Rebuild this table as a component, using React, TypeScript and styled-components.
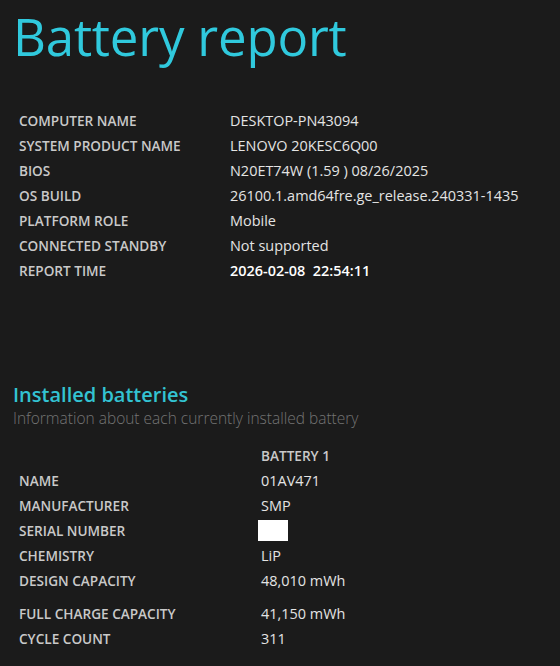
import React from 'react';
import styled, { createGlobalStyle } from 'styled-components';

const GlobalStyle = createGlobalStyle`
  html, body {
    margin: 0;
    padding: 0;
    background-color: #1b1b1b;
  }
  body {
    font-family: 'Open Sans', 'Noto Sans', sans-serif;
  }
`;

const Page = styled.div`
  width: 560px;
  height: 666px;
  overflow: hidden;
  background-color: #1b1b1b;
  padding: 0 0 0 13px;
  box-sizing: border-box;
`;

const Title = styled.h1`
  margin: 0;
  height: 108px;
  font-family: 'Open Sans', sans-serif;
  font-weight: 400;
  font-size: 51px;
  line-height: 72px;
  color: #30c9dd;
  letter-spacing: -0.2px;
`;

const Table = styled.div`
  display: flex;
  flex-direction: column;
  padding-left: 6px;
`;

const Row = styled.div<{ $spaced?: boolean }>`
  display: flex;
  align-items: center;
  height: 25px;
  margin-top: ${(p) => (p.$spaced ? '8px' : '0')};
`;

const Label = styled.div<{ $width: number }>`
  width: ${(p) => p.$width}px;
  flex-shrink: 0;
  font-family: 'Open Sans', sans-serif;
  font-weight: 600;
  font-size: 13.6px;
  color: #c9c9c9;
  text-transform: uppercase;
  white-space: nowrap;
`;

const Value = styled.div<{ $strong?: boolean }>`
  font-family: 'Open Sans', sans-serif;
  font-weight: ${(p) => (p.$strong ? 600 : 400)};
  font-size: 14.45px;
  color: ${(p) => (p.$strong ? '#ffffff' : '#e4e4e4')};
  white-space: pre;
`;

const Section = styled.div`
  margin-top: 100px;
`;

const SectionTitle = styled.h2`
  margin: 0;
  font-family: 'Open Sans', sans-serif;
  font-weight: 600;
  font-size: 20px;
  line-height: 24px;
  color: #33c3d2;
`;

const SectionSub = styled.div`
  font-family: 'Open Sans', sans-serif;
  font-weight: 300;
  font-size: 15.5px;
  line-height: 22px;
  color: #747474;
  margin-bottom: 14px;
`;

const Redacted = styled.span`
  display: inline-block;
  width: 30px;
  height: 21px;
  margin-left: -3px;
  background-color: #ffffff;
  vertical-align: middle;
`;

const systemInfo: [string, string, boolean?][] = [
  ['Computer name', 'DESKTOP-PN43094'],
  ['System product name', 'LENOVO 20KESC6Q00'],
  ['BIOS', 'N20ET74W (1.59 ) 08/26/2025'],
  ['OS build', '26100.1.amd64fre.ge_release.240331-1435'],
  ['Platform role', 'Mobile'],
  ['Connected standby', 'Not supported'],
  ['Report time', '2026-02-08  22:54:11', true],
];

const batteryInfo: { label: string; value: React.ReactNode; spaced?: boolean }[] = [
  { label: 'Name', value: '01AV471' },
  { label: 'Manufacturer', value: 'SMP' },
  { label: 'Serial number', value: <Redacted /> },
  { label: 'Chemistry', value: 'LiP' },
  { label: 'Design capacity', value: '48,010 mWh' },
  { label: 'Full charge capacity', value: '41,150 mWh', spaced: true },
  { label: 'Cycle count', value: '311' },
];

const App: React.FC = () => {
  return (
    <>
      <GlobalStyle />
      <Page>
        <Title>Battery report</Title>
        <Table>
          {systemInfo.map(([label, value, strong]) => (
            <Row key={label}>
              <Label $width={211}>{label}</Label>
              <Value $strong={strong}>{value}</Value>
            </Row>
          ))}
        </Table>

        <Section>
          <SectionTitle>Installed batteries</SectionTitle>
          <SectionSub>Information about each currently installed battery</SectionSub>
          <Table>
            <Row>
              <Label $width={242} />
              <Label $width={120}>Battery 1</Label>
            </Row>
            {batteryInfo.map((item) => (
              <Row key={item.label} $spaced={item.spaced}>
                <Label $width={242}>{item.label}</Label>
                <Value>{item.value}</Value>
              </Row>
            ))}
          </Table>
        </Section>
      </Page>
    </>
  );
};

export default App;
